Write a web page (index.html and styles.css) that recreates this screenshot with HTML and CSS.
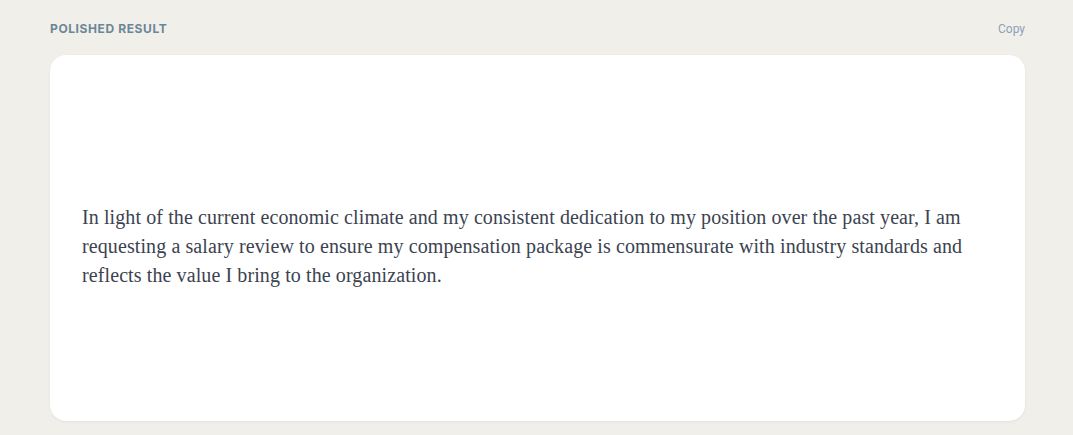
FILE: index.html
```html
<!DOCTYPE html>
<html lang="en">
<head>
<meta charset="utf-8">
<title>Polished Result</title>
<link rel="stylesheet" href="styles.css">
</head>
<body>
<main class="panel">
  <header class="panel-head">
    <h2 class="label">Polished Result</h2>
    <button class="copy" type="button">Copy</button>
  </header>
  <section class="card">
    <p class="result">In light of the current economic climate and my consistent dedication to my position over the past year, I am requesting a salary review to ensure my compensation package is commensurate with industry standards and reflects the value I bring to the organization.</p>
  </section>
</main>
</body>
</html>
```

FILE: styles.css
```css
* { box-sizing: border-box; }
html, body { margin: 0; padding: 0; }
body {
  background: #f1efea;
  font-family: "Inter", "Liberation Sans", sans-serif;
  height: 435px;
  overflow: hidden;
}
.panel {
  padding: 20px 48px 0 50px;
}
.panel-head {
  display: flex;
  justify-content: space-between;
  align-items: center;
  height: 17px;
  margin-bottom: 18px;
}
.label {
  margin: 0;
  font-size: 12px;
  font-weight: 700;
  letter-spacing: 0.6px;
  text-transform: uppercase;
  color: #6b8696;
}
.copy {
  border: 0;
  background: none;
  padding: 0;
  font-family: "Roboto", "Liberation Sans", sans-serif;
  font-size: 12px;
  color: #8d9fb8;
  cursor: pointer;
}
.card {
  background: #fff;
  border-radius: 16px;
  height: 366px;
  box-shadow: 0 1px 3px rgba(0,0,0,0.06);
  display: flex;
  align-items: center;
  padding: 16px 32px 0 32px;
}
.result {
  margin: 0;
  font-family: "Liberation Serif", serif;
  font-size: 20px;
  letter-spacing: 0.1px;
  line-height: 29px;
  color: #3b4350;
  max-width: 898px;
}
```
